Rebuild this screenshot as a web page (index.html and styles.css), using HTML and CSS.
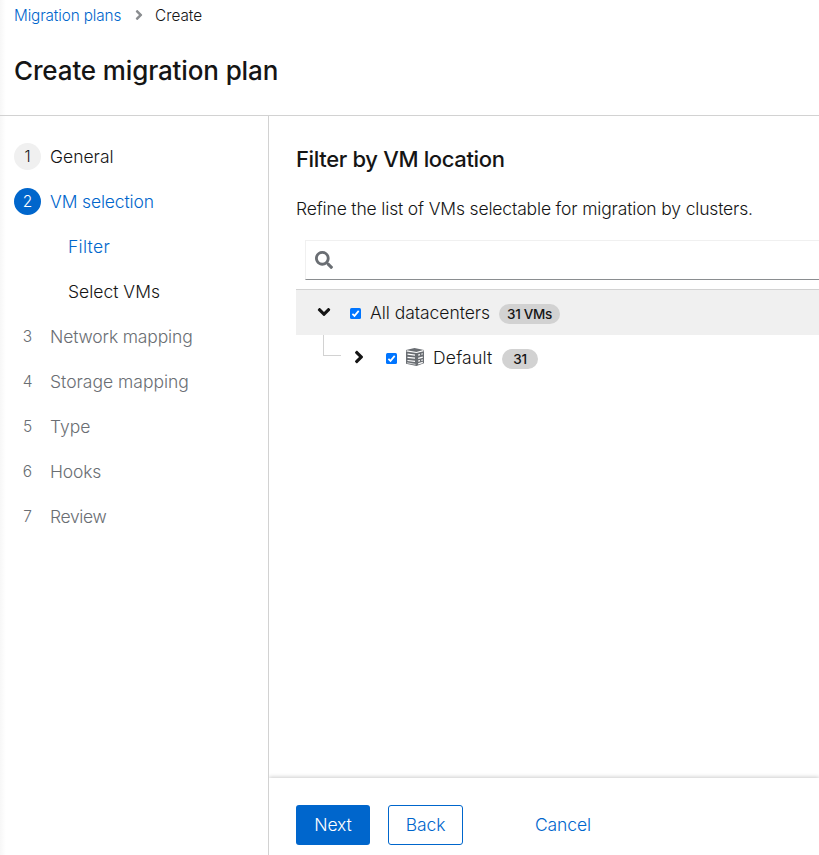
FILE: index.html
```html
<!DOCTYPE html>
<html lang="en">
<head>
<meta charset="utf-8">
<title>Create migration plan</title>
<link rel="stylesheet" href="styles.css">
</head>
<body>
<div class="page">
  <header class="header">
    <nav class="breadcrumb">
      <a class="crumb-link">Migration plans</a>
      <svg class="crumb-sep" viewBox="0 0 256 512"><path d="M224.300 273l-136 136c-9.400 9.400-24.600 9.400-33.900 0l-22.600-22.600c-9.400-9.400-9.400-24.600 0-33.900l96.400-96.400-96.400-96.400c-9.400-9.400-9.400-24.600 0-33.900L54.300 103c9.400-9.400 24.600-9.400 33.900 0l136 136c9.500 9.400 9.500 24.600.1 34z"/></svg>
      <span>Create</span>
    </nav>
    <h1 class="title">Create migration plan</h1>
  </header>
  <div class="wizard">
    <nav class="steps">
      <a class="step"><span class="num num-done">1</span><span>General</span></a>
      <a class="step current"><span class="num num-current">2</span><span class="tight">VM selection</span></a>
      <a class="step sub current"><span class="wide">Filter</span></a>
      <a class="step sub"><span>Select VMs</span></a>
      <a class="step disabled"><span class="num">3</span><span class="tight">Network mapping</span></a>
      <a class="step disabled"><span class="num">4</span><span>Storage mapping</span></a>
      <a class="step disabled"><span class="num">5</span><span>Type</span></a>
      <a class="step disabled"><span class="num">6</span><span class="tight">Hooks</span></a>
      <a class="step disabled"><span class="num">7</span><span class="tighter">Review</span></a>
    </nav>
    <section class="content">
      <main class="main">
        <h2 class="heading">Filter by VM location</h2>
        <p class="description">Refine the list of VMs selectable for migration by clusters.</p>
        <div class="search">
          <svg class="search-icon" viewBox="0 0 512 512"><path d="M505 442.700L405.300 343c-4.500-4.500-10.600-7-17-7H372c27.600-35.300 44-79.700 44-128C416 93.100 322.900 0 208 0S0 93.100 0 208s93.100 208 208 208c48.300 0 92.700-16.400 128-44v16.300c0 6.400 2.500 12.500 7 17l99.700 99.700c9.400 9.400 24.600 9.400 33.900 0l28.300-28.300c9.400-9.400 9.400-24.600.1-34zM208 336c-70.700 0-128-57.200-128-128 0-70.700 57.200-128 128-128 70.700 0 128 57.200 128 128 0 70.700-57.200 128-128 128z"/></svg>
        </div>
        <div class="tree">
          <div class="row row-root">
            <svg class="toggle open" viewBox="0 0 256 512"><path d="M224.300 273l-136 136c-9.400 9.400-24.600 9.400-33.900 0l-22.600-22.600c-9.400-9.400-9.400-24.600 0-33.900l96.400-96.400-96.400-96.400c-9.400-9.400-9.400-24.600 0-33.900L54.300 103c9.400-9.400 24.600-9.400 33.900 0l136 136c9.500 9.400 9.500 24.600.1 34z"/></svg>
            <svg class="check" viewBox="0 0 11 11"><rect width="11" height="11" rx="1.5"/><path d="M2.400 5.800l2.100 2.100L8.700 2.900"/></svg>
            <span class="label-root">All datacenters</span>
            <span class="badge badge-root">31 VMs</span>
          </div>
          <div class="row row-child">
            <span class="branch"></span>
            <svg class="toggle" viewBox="0 0 256 512"><path d="M224.300 273l-136 136c-9.400 9.400-24.600 9.400-33.900 0l-22.600-22.600c-9.400-9.400-9.400-24.600 0-33.900l96.400-96.400-96.400-96.400c-9.400-9.400-9.400-24.600 0-33.900L54.300 103c9.400-9.400 24.600-9.400 33.900 0l136 136c9.500 9.400 9.500 24.600.1 34z"/></svg>
            <svg class="check check-child" viewBox="0 0 11 11"><rect width="11" height="11" rx="1.5"/><path d="M2.400 5.800l2.100 2.100L8.700 2.900"/></svg>
            <svg class="cluster" viewBox="0 0 18 18"><path class="solid" d="M0 2L8.500 0 18 2v13.300L10.500 18 0 15.800z"/><path class="cut" d="M.6 2.800l9.900 1.700 7-1.900M1.500 6.200l7.500 1M1.500 9.400l7.500.7M1.500 12.500l7.500.8M12.200 7.200l1.800-.5M15.300 6.300l1.500-.5M12.200 10.300l4.600-1.200M12.200 13.200l1.800-.5M15.300 12.300l1.500-.4M12.200 15.900l4.600-1.500"/><path class="edge" d="M1 14.800l8.500 1.500"/></svg>
            <span class="label-child">Default</span>
            <span class="badge badge-child">31</span>
          </div>
        </div>
      </main>
      <footer class="footer">
        <button class="btn primary">Next</button>
        <button class="btn secondary">Back</button>
        <button class="btn link">Cancel</button>
      </footer>
    </section>
  </div>
</div>
</body>
</html>
```
FILE: styles.css
```css
* { box-sizing: border-box; }
body { margin: 0; font-family: Inter, sans-serif; font-weight: 300; font-size: 17.5px; color: #151515; background: #fff; }
.page { height: 855px; overflow: hidden; display: flex; flex-direction: column; background: linear-gradient(90deg, #f7f7f7, #fff 6px); }
.header { height: 116px; flex: none; border-bottom: 1px solid #d2d2d2; padding-left: 14px; }
.breadcrumb { height: 31px; display: flex; align-items: center; font-size: 15.3px; }
.crumb-link { color: #06c; width: 107px; letter-spacing: -.12px; white-space: nowrap; }
.crumb-sep { width: 8px; height: 16px; margin: 0 12px 2px 14px; fill: #8a8d90; }
.title { margin: 19px 0 0; height: 42px; line-height: 42px; font-size: 26px; font-weight: 450; letter-spacing: -.13px; }
.wizard { flex: 1; display: flex; min-height: 0; }
.steps { width: 269px; flex: none; border-right: 1px solid #d2d2d2; padding: 18px 0 0 14px; display: flex; flex-direction: column; }
.step { display: flex; align-items: center; height: 45px; }
.num { width: 27px; height: 27px; border-radius: 50%; margin-right: 9px; display: flex; align-items: center; justify-content: center; font-size: 15.5px; }
.num-done { background: #f0f0f0; }
.current { color: #06c; }
.num-current { background: #06c; color: #fff; }
.sub { padding-left: 54px; }
.disabled { color: #6a6e73; }
.tight { letter-spacing: -.15px; }
.tighter { letter-spacing: -.35px; }
.wide { letter-spacing: .28px; }
.content { flex: 1; min-width: 0; display: flex; flex-direction: column; }
.main { flex: 1; padding: 27px 0 0 27px; }
.heading { margin: 0; height: 32px; line-height: 33px; font-size: 22px; font-weight: 450; letter-spacing: -.35px; }
.description { margin: 20px 0 0; height: 27px; line-height: 27px; letter-spacing: -.16px; }
.search { margin: 18px 0 0 9px; height: 40px; border: 1px solid #f0f0f0; border-right: 0; border-bottom-color: #8a8d90; padding: 10px 0 0 9px; }
.search-icon { width: 18px; height: 18px; display: block; fill: #6a6e73; }
.tree { margin-top: 9px; border-top: 1px solid #d2d2d2; }
.row { height: 45px; display: flex; align-items: center; }
.row-root { background: #f0f0f0; padding-left: 23px; }
.toggle { width: 10px; height: 20px; fill: #151515; margin-bottom: 1px; }
.open { transform: rotate(90deg); }
.check { width: 11px; height: 11px; margin: 2px 9px 0 21px; fill: #0075ff; }
.check-child { margin-left: 22px; }
.check path { fill: none; stroke: #fff; stroke-width: 1.7; }
.label-root { width: 120px; white-space: nowrap; letter-spacing: -.05px; }
.label-child { width: 60px; letter-spacing: .2px; }
.badge { height: 20px; border-radius: 10px; background: #d2d2d2; font-size: 13.5px; font-weight: 500; display: flex; align-items: center; justify-content: center; margin: 2px 0 0 9px; letter-spacing: -.3px; }
.badge-root { width: 61px; }
.badge-child { width: 36px; }
.row-child { padding-left: 27px; }
.branch { width: 18px; height: 21px; border-left: 1px solid #d2d2d2; border-bottom: 1px solid #d2d2d2; align-self: flex-start; margin-right: 13px; }
.cluster { width: 18px; height: 18px; margin: 0 9px 1px 0; }
.solid { fill: #6a6e73; }
.cut { fill: none; stroke: #fff; stroke-width: 1.2; }
.edge { fill: none; stroke: #fff; stroke-width: .7; }
.footer { height: 77px; flex: none; padding: 27px 0 0 27px; display: flex; box-shadow: 0 -1px 4px rgba(3,3,3,.2); clip-path: inset(-8px 0 0 0); }
.btn { height: 40px; padding: 0 0 2px; border: 0; border-radius: 3px; background: none; font: inherit; color: #06c; letter-spacing: -.1px; }
.primary { width: 74px; background: #06c; color: #fff; margin-right: 18px; }
.secondary { width: 75px; border: 1px solid #06c; margin-right: 54px; }
.link { width: 92px; }
```
